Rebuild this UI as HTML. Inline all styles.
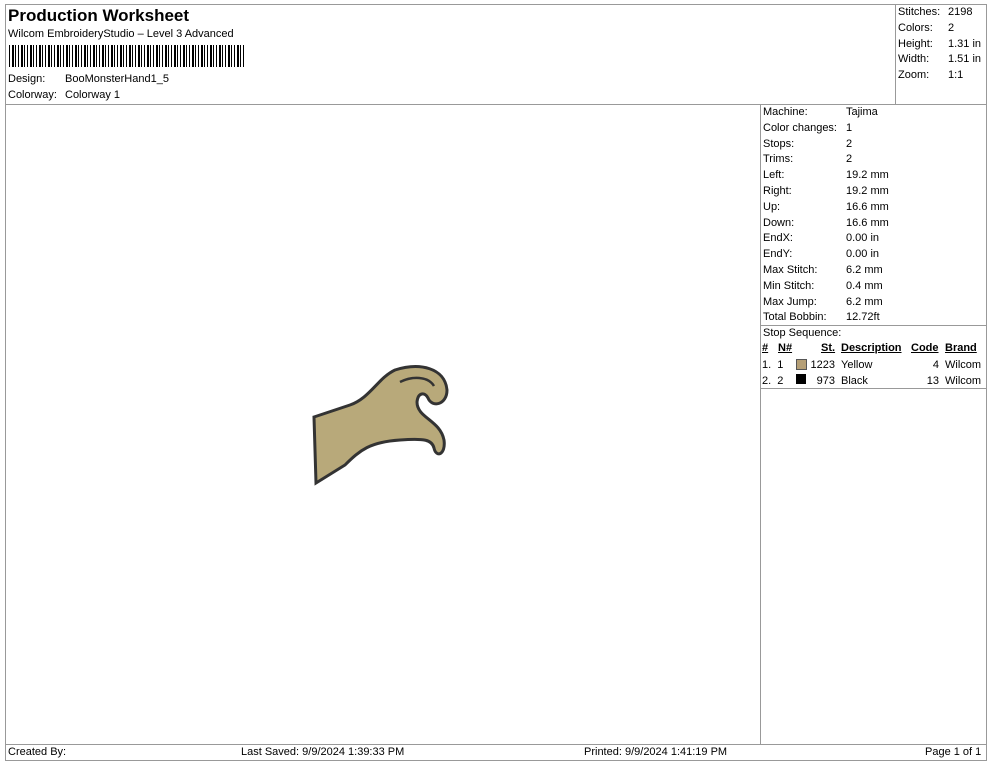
<!DOCTYPE html>
<html><head><style>
body{margin:0;width:990px;height:762px;background:#fff;font-family:"Liberation Sans",sans-serif;color:#000;position:relative;overflow:hidden}
.a{position:absolute;white-space:nowrap;font-size:11px}
.l{position:absolute;background:#999}
</style></head><body>
<div style="position:absolute;left:5px;top:4px;width:980px;height:755px;border:1px solid #999"></div>
<div class="l" style="left:5px;top:104px;width:981px;height:1px"></div>
<div class="l" style="left:895px;top:4px;width:1px;height:100px"></div>
<div class="l" style="left:760px;top:104px;width:1px;height:640px"></div>
<div class="l" style="left:5px;top:744px;width:981px;height:1px"></div>
<div class="l" style="left:760px;top:325px;width:226px;height:1px"></div>
<div class="l" style="left:760px;top:388px;width:226px;height:1px"></div>
<div class="a" style="left:8px;top:6px;font-size:17px;font-weight:bold">Production Worksheet</div>
<div class="a" style="left:8px;top:28px">Wilcom EmbroideryStudio – Level 3 Advanced</div>
<div style="position:absolute;left:9px;top:45px;width:235px;height:22px;background:repeating-linear-gradient(90deg,#000 0 1px,#fff 1px 3px,#000 3px 5px,#fff 5px 6px,#000 6px 7px,#fff 7px 9px)"></div>
<div class="a" style="left:8px;top:73px">Design:</div><div class="a" style="left:65px;top:73px">BooMonsterHand1_5</div>
<div class="a" style="left:8px;top:89px">Colorway:</div><div class="a" style="left:65px;top:89px">Colorway 1</div>
<div class="a" style="left:898px;top:5px;line-height:15.8px">Stitches:<br>Colors:<br>Height:<br>Width:<br>Zoom:</div>
<div class="a" style="left:948px;top:5px;line-height:15.8px">2198<br>2<br>1.31 in<br>1.51 in<br>1:1</div>
<div class="a" style="left:763px;top:105px;line-height:15.8px">Machine:<br>Color changes:<br>Stops:<br>Trims:<br>Left:<br>Right:<br>Up:<br>Down:<br>EndX:<br>EndY:<br>Max Stitch:<br>Min Stitch:<br>Max Jump:<br>Total Bobbin:<br>Stop Sequence:</div>
<div class="a" style="left:846px;top:105px;line-height:15.8px">Tajima<br>1<br>2<br>2<br>19.2 mm<br>19.2 mm<br>16.6 mm<br>16.6 mm<br>0.00 in<br>0.00 in<br>6.2 mm<br>0.4 mm<br>6.2 mm<br>12.72ft</div>
<div class="a" style="left:762px;top:342px;font-weight:bold;text-decoration:underline">#</div>
<div class="a" style="left:778px;top:342px;font-weight:bold;text-decoration:underline">N#</div>
<div class="a" style="left:821px;top:342px;font-weight:bold;text-decoration:underline">St.</div>
<div class="a" style="left:841px;top:342px;font-weight:bold;text-decoration:underline">Description</div>
<div class="a" style="left:911px;top:342px;font-weight:bold;text-decoration:underline">Code</div>
<div class="a" style="left:945px;top:342px;font-weight:bold;text-decoration:underline">Brand</div>
<div class="a" style="left:762px;top:358px;line-height:15.8px">1.&nbsp; 1<br>2.&nbsp; 2</div>
<div style="position:absolute;left:796px;top:359px;width:9px;height:9px;background:#b59f76;border:1px solid #555"></div>
<div style="position:absolute;left:796px;top:374px;width:10px;height:10px;background:#000"></div>
<div class="a" style="left:800px;top:358px;width:35px;text-align:right;line-height:15.8px">1223<br>973</div>
<div class="a" style="left:841px;top:358px;line-height:15.8px">Yellow<br>Black</div>
<div class="a" style="left:900px;top:358px;width:39px;text-align:right;line-height:15.8px">4<br>13</div>
<div class="a" style="left:945px;top:358px;line-height:15.8px">Wilcom<br>Wilcom</div>
<svg style="position:absolute;left:0;top:0" width="990" height="762">
<path d="M314,417 L350,405 C370,398 378,378 395,370 C420,362 445,368 447,390 C447,405 432,408 428,398 C425,392 418,392 417,402 C417,418 440,420 444,440 C446,455 436,458 434,448 C432,440 425,438 400,440 C370,442 360,450 345,465 L316,483 Z" fill="#b8a97a" stroke="#333" stroke-width="3"/>
<path d="M400,382 C412,376 428,376 434,386" fill="none" stroke="#333" stroke-width="2.5"/>
</svg>
<div class="a" style="left:8px;top:746px">Created By:</div>
<div class="a" style="left:241px;top:746px">Last Saved: 9/9/2024 1:39:33 PM</div>
<div class="a" style="left:584px;top:746px">Printed: 9/9/2024 1:41:19 PM</div>
<div class="a" style="left:925px;top:746px">Page 1 of 1</div>
</body></html>
